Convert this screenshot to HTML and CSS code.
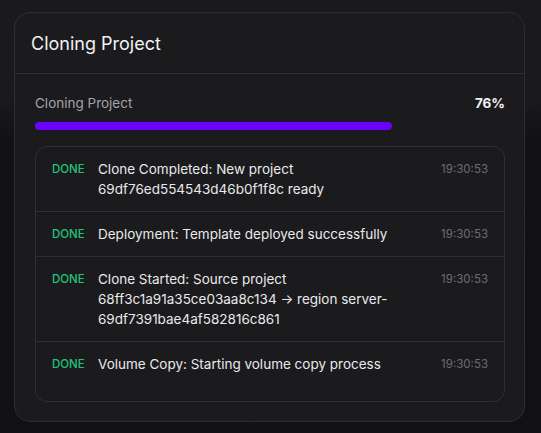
FILE: index.html
```html
<!DOCTYPE html>
<html lang="en">
<head>
<meta charset="utf-8">
<title>Cloning Project</title>
<link rel="stylesheet" href="styles.css">
</head>
<body>
<div class="page">
  <section class="card">
    <header class="card-header">
      <h2 class="card-title">Cloning Project</h2>
    </header>
    <div class="card-body">
      <div class="progress-head">
        <span class="progress-label">Cloning Project</span>
        <span class="progress-pct">76%</span>
      </div>
      <div class="progress-track">
        <div class="progress-fill" style="width:76%"></div>
      </div>
      <div class="log">
        <div class="log-row">
          <span class="log-status">DONE</span>
          <span class="log-msg">Clone Completed: New project 69df76ed554543d46b0f1f8c ready</span>
          <span class="log-time">19:30:53</span>
        </div>
        <div class="log-row">
          <span class="log-status">DONE</span>
          <span class="log-msg">Deployment: Template deployed successfully</span>
          <span class="log-time">19:30:53</span>
        </div>
        <div class="log-row">
          <span class="log-status">DONE</span>
          <span class="log-msg">Clone Started: Source project 68ff3c1a91a35ce03aa8c134 → region server-69df7391bae4af582816c861</span>
          <span class="log-time">19:30:53</span>
        </div>
        <div class="log-row">
          <span class="log-status">DONE</span>
          <span class="log-msg">Volume Copy: Starting volume copy process</span>
          <span class="log-time">19:30:53</span>
        </div>
      </div>
    </div>
  </section>
</div>
</body>
</html>
```
FILE: styles.css
```css
* { box-sizing: border-box; }
html, body { margin: 0; padding: 0; }
body {
  width: 541px;
  height: 433px;
  overflow: hidden;
  font-family: Inter, "Liberation Sans", sans-serif;
  background: linear-gradient(to bottom, #1a1a1c 0px, #1a1a1c 100px, #121214 140px, #111113 100%);
}
.page {
  padding: 12px 16px 0 14px;
}
.card {
  width: 511px;
  height: 410px;
  background: #1b1b1e;
  border: 1px solid #2d2d31;
  border-radius: 16px;
  display: flex;
  flex-direction: column;
}
.card-header {
  height: 61px;
  padding: 0 16px;
  display: flex;
  align-items: center;
  border-bottom: 1px solid #2f2f34;
}
.card-title {
  margin: 0;
  font-size: 18px;
  font-weight: 400;
  color: #f1f1f3;
}
.card-body {
  padding: 19px 19px 19px 20px;
}
.progress-head {
  display: flex;
  justify-content: space-between;
  align-items: center;
  height: 20px;
}
.progress-label {
  font-size: 13.5px;
  color: #a3a3a8;
}
.progress-pct {
  font-size: 13.5px;
  font-weight: 700;
  color: #f1f1f3;
}
.progress-track {
  margin-top: 9px;
  height: 8px;
  border-radius: 4px;
}
.progress-fill {
  height: 100%;
  background: #6a00ff;
  border-radius: 4px;
}
.log {
  margin-top: 16px;
  height: 256px;
  border: 1px solid #2f2f34;
  border-radius: 12px;
  overflow: hidden;
}
.log-row {
  display: flex;
  align-items: flex-start;
  gap: 12px;
  padding: 12px 16px;
  border-bottom: 1px solid #2f2f34;
}
.log-row:last-child { border-bottom: none; }
.log-status {
  font-size: 11.5px;
  font-weight: 500;
  line-height: 20px;
  color: #22c27a;
  width: 34px;
  flex: none;
}
.log-msg {
  flex: 1;
  font-size: 13.5px;
  line-height: 20px;
  color: #e9e9eb;
}
.log-time {
  flex: none;
  font-size: 11.5px;
  line-height: 20px;
  color: #6c6c72;
}
```
